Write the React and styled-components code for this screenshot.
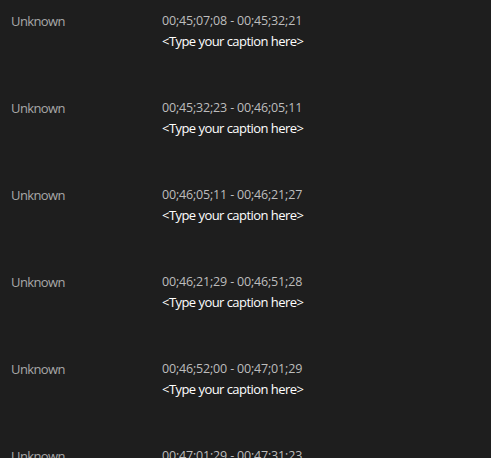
import React from "react";
import styled, { createGlobalStyle } from "styled-components";

const Global = createGlobalStyle`
  html, body { margin: 0; padding: 0; background: #1e1e1e; overflow: hidden; }
  body { font-family: "Open Sans", "Noto Sans", sans-serif; }
`;

const List = styled.div`
  width: 491px;
  height: 458px;
  background: #1e1e1e;
  display: flex;
  flex-direction: column;
  overflow: hidden;
`;

const Row = styled.div`
  flex: 0 0 auto;
  height: 87px;
  box-sizing: border-box;
  padding: 11px 0 0 11px;
  display: grid;
  grid-template-columns: 151px 1fr;
  align-items: start;
`;

const Speaker = styled.div`
  font-size: 13px;
  line-height: 20px;
  color: #a8a8a8;
  letter-spacing: -0.6px;
`;

const Body = styled.div`
  display: flex;
  flex-direction: column;
`;

const Time = styled.div`
  font-size: 12.5px;
  line-height: 20px;
  color: #bdbdbd;
  letter-spacing: -0.18px;
`;

const Caption = styled.div`
  font-size: 13px;
  line-height: 20px;
  color: #ffffff;
  letter-spacing: -0.55px;
`;

const rows = [
  ["00;45;07;08", "00;45;32;21"],
  ["00;45;32;23", "00;46;05;11"],
  ["00;46;05;11", "00;46;21;27"],
  ["00;46;21;29", "00;46;51;28"],
  ["00;46;52;00", "00;47;01;29"],
  ["00;47;01;29", "00;47;31;23"],
];

export default function App() {
  return (
    <>
      <Global />
      <List>
        {rows.map(([a, b]) => (
          <Row key={a}>
            <Speaker>Unknown</Speaker>
            <Body>
              <Time>{a} - {b}</Time>
              <Caption>&lt;Type your caption here&gt;</Caption>
            </Body>
          </Row>
        ))}
      </List>
    </>
  );
}
